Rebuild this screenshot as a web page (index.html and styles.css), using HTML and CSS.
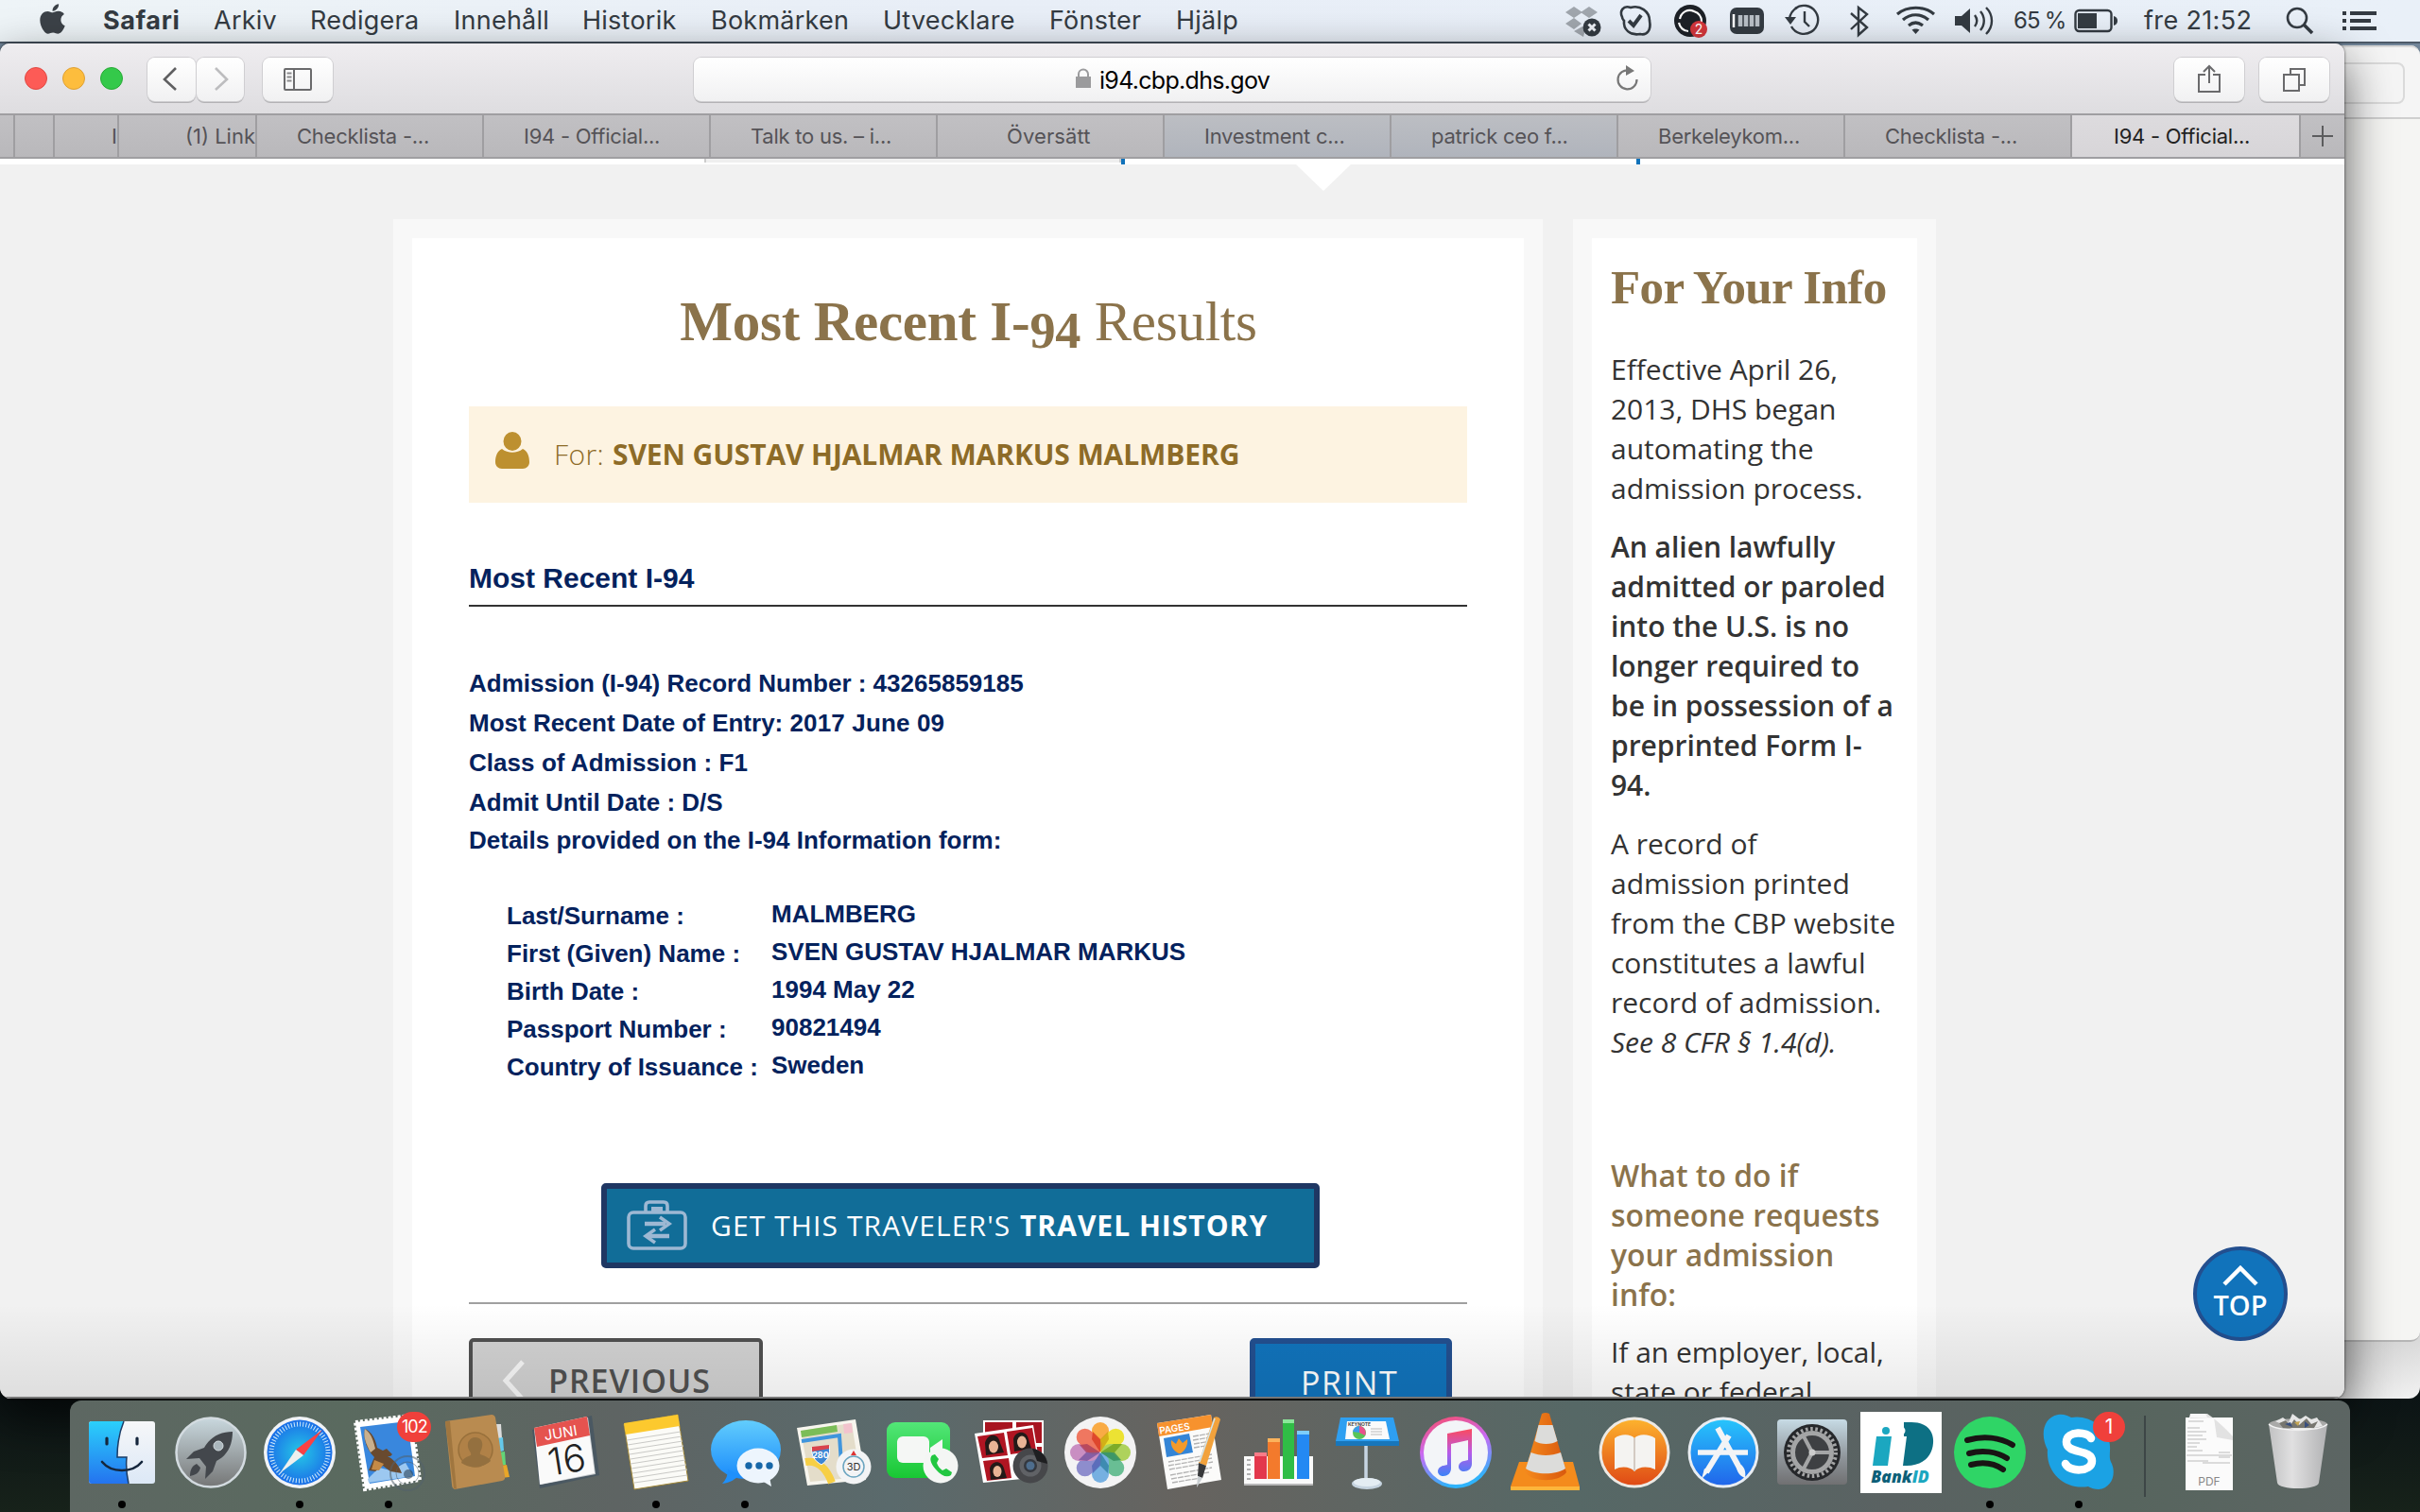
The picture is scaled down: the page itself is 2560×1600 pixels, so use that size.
FILE: index.html
```html
<!DOCTYPE html>
<html lang="sv">
<head>
<meta charset="utf-8">
<title>I94 - Official Website</title>
<link rel="stylesheet" href="styles.css">
</head>
<body>
<div class="desktop">

<header class="menubar">
  <nav class="menus">
    <svg class="apple" viewBox="0 28 384 456"><path d="M318.7 268.7c-.2-36.7 16.4-64.4 50-84.8-18.8-26.9-47.2-41.7-84.7-44.6-35.5-2.8-74.3 20.7-88.5 20.7-15 0-49.4-19.7-76.4-19.7C63.3 141.2 4 184.8 4 273.5q0 39.3 14.4 81.2c12.8 36.7 59 126.7 107.2 125.2 25.2-.6 43-17.9 75.8-17.9 31.8 0 48.3 17.9 76.4 17.9 48.6-.7 90.4-82.5 102.6-119.3-65.2-30.7-61.7-90-61.7-91.9zm-56.6-164.2c27.3-32.4 24.8-61.9 24-72.5-24.1 1.4-52 16.4-67.9 34.9-17.5 19.8-27.8 44.3-25.6 71.9 26.1 2 49.9-11.4 69.5-34.3z"/></svg>
    <b>Safari</b><span>Arkiv</span><span>Redigera</span><span>Innehåll</span><span>Historik</span><span>Bokmärken</span><span>Utvecklare</span><span>Fönster</span><span>Hjälp</span>
  </nav>
  <div class="status">
    <svg width="44" height="44" viewBox="0 0 44 44"><g fill="#a0a6ad"><path d="M11 7l9 6-9 6-9-6zM27 7l9 6-9 6-9-6zM11 19l8 6-8 6-9-6zM11 33l10 6 2-8-3-3z"/></g><circle cx="30" cy="29" r="9.500" fill="#343b42"/><path d="M26.500 25.500l7 7m0-7l-7 7" stroke="#eef2f7" stroke-width="3"/></svg>
    <svg width="40" height="44" viewBox="0 0 40 44"><path d="M6 18C3 12 7 5 15 8c10-3 20 4 20 14 2 10-3 16-10 14-11 2-18-5-17-14-1-1-2-3-2-4z" fill="none" stroke="#343b42" stroke-width="2.600"/><path d="M13 22l5 5 8-11" fill="none" stroke="#343b42" stroke-width="4"/></svg>
    <svg width="42" height="44" viewBox="0 0 42 44"><circle cx="20" cy="22" r="17" fill="#1d2127"/><path d="M9 20c2-8 9-11 15-8 6 2 8 6 8 11M8 24c1 5 5 9 10 9" fill="none" stroke="#fff" stroke-width="2.200"/><circle cx="29" cy="31" r="9" fill="#d3363c"/><text x="29" y="36" class="tiny" font-size="14">2</text></svg>
    <svg width="40" height="44" viewBox="0 0 40 44"><rect x="2" y="8" width="36" height="28" rx="7" fill="#343b42"/><path d="M6 15v14" stroke="#fff" stroke-width="2.500"/><path d="M13 16v12M19 16v12M25 16v12M31 16v12" stroke="#b9c0c7" stroke-width="4.500"/></svg>
    <svg width="40" height="44" viewBox="0 0 40 44"><path d="M8 28A15 15 0 1 0 12 9" fill="none" stroke="#343b42" stroke-width="2.400"/><path d="M6 20A16 16 0 0 1 14 8" fill="none" stroke="#343b42" stroke-width="2.400"/><path d="M1 18h12l-6 8z" fill="#343b42"/><path d="M22 12v11l5 5" fill="none" stroke="#343b42" stroke-width="2.400"/></svg>
    <svg width="34" height="44" viewBox="0 0 34 44"><path d="M8 14l17 15-9 8V8l9 7L8 31" fill="none" stroke="#343b42" stroke-width="2.400"/></svg>
    <svg width="46" height="44" viewBox="0 0 46 44"><path d="M3 15c11-9 28-9 39 0M9 21c8-7 19-7 27 0M15 27c5-4 10-4 15 0" fill="none" stroke="#343b42" stroke-width="3.200"/><path d="M18.500 31.500c2-1.500 6-1.500 8 0L22.500 36z" fill="#343b42"/></svg>
    <svg width="46" height="44" viewBox="0 0 46 44"><path d="M2 17h7l9-8v26l-9-8H2z" fill="#343b42"/><path d="M23 16c3 4 3 8 0 12M29 12c5 6 5 14 0 20M35 8c8 8 8 20 0 28" fill="none" stroke="#343b42" stroke-width="2.400"/></svg>
    <span class="pct">65 %</span>
    <svg width="48" height="44" viewBox="0 0 48 44"><rect x="1.500" y="11" width="38" height="22" rx="4" fill="none" stroke="#343b42" stroke-width="2.400"/><rect x="4" y="14" width="20" height="16" fill="#343b42"/><path d="M42 17q4 1 4 5t-4 5z" fill="#343b42"/></svg>
    <span class="clock">fre 21:52</span>
    <svg width="32" height="44" viewBox="0 0 32 44"><circle cx="12" cy="19" r="10" fill="none" stroke="#343b42" stroke-width="2.600"/><path d="M19 26l9 9" stroke="#343b42" stroke-width="3.600"/></svg>
    <svg width="38" height="44" viewBox="0 0 38 44"><path d="M0 14h4M8 14h28M0 22h4M8 22h22M0 30h4M8 30h28" stroke="#343b42" stroke-width="4"/></svg>
  </div>
</header>

<div class="back back-lower"></div>
<div class="back back-upper"><div class="back-bar"><div class="back-field"></div></div></div>

<section class="window">
  <div class="toolbar">
    <div class="lights"><span class="red"></span><span class="yellow"></span><span class="green"></span></div>
    <div class="btn back-btn"><svg width="50" height="46" viewBox="0 0 50 46"><path d="M30 11L18 23l12 11" fill="none" stroke="#5f5f61" stroke-width="2.600"/></svg></div>
    <div class="btn fwd-btn"><svg width="50" height="46" viewBox="0 0 50 46"><path d="M20 11l12 12-12 11" fill="none" stroke="#bdbdbf" stroke-width="2.600"/></svg></div>
    <div class="btn side-btn"><svg width="74" height="46" viewBox="0 0 74 46"><rect x="23" y="12" width="28" height="22" rx="1" fill="none" stroke="#6a6a6c" stroke-width="2"/><path d="M33 12v22" stroke="#6a6a6c" stroke-width="2"/><path d="M25.500 16.500h5m-5 4h5m-5 4h5" stroke="#8a8a8c" stroke-width="2"/></svg></div>
    <div class="url">
      <svg class="lock" width="16" height="22" viewBox="0 0 16 22"><rect y="9" width="16" height="12" fill="#9b9b9d"/><path d="M3 10V6.500a5 5 0 0 1 10 0V10" fill="none" stroke="#9b9b9d" stroke-width="2"/></svg>
      <span class="host">i94.cbp.dhs.gov</span>
      <svg class="reload" width="26" height="30" viewBox="0 0 26 30"><path d="M22.500 16a10 10 0 1 1-8-9.500" fill="none" stroke="#777" stroke-width="2.200"/><path d="M11 1l9 6-9 5z" fill="#777"/></svg>
    </div>
    <div class="btn share-btn"><svg width="74" height="46" viewBox="0 0 74 46"><path d="M33 18h-7v18h22V18h-7M37 27V9m-6 6l6-6 6 6" fill="none" stroke="#6a6a6c" stroke-width="2"/></svg></div>
    <div class="btn tabs-btn"><svg width="74" height="46" viewBox="0 0 74 46"><path d="M33 17v-5h15v17h-5M26 18h16v17H26z" fill="none" stroke="#6a6a6c" stroke-width="2"/></svg></div>
  </div>
  <div class="tabs">
    <div></div><div></div><div class="cut cut-i">I</div><div class="cut">(1) Link</div>
    <div class="tab">Checklista -...</div>
    <div class="tab">I94 - Official...</div>
    <div class="tab">Talk to us. – i...</div>
    <div class="tab mid">Översätt</div>
    <div class="tab cool">Investment c...</div>
    <div class="tab cool">patrick ceo f...</div>
    <div class="tab">Berkeleykom...</div>
    <div class="tab">Checklista -...</div>
    <div class="tab active">I94 - Official...</div>
    <div class="plus"><svg width="22" height="22" viewBox="0 0 22 22"><path d="M11 0v22M0 11h22" stroke="#5c5c5e" stroke-width="2"/></svg></div>
  </div>

  <main class="page">
    <div class="strip"><span class="strip-gray"></span><span class="tick"></span><span class="strip-gap"></span><span class="tick"></span></div>
    <svg class="pointer" width="58" height="28" viewBox="0 0 58 28"><path d="M0 0h58L29 28z" fill="#fff"/></svg>
    <div class="columns">
      <article class="card main-card"><div class="inner">
        <h1><b>Most Recent I-<span class="old">94</span></b> Results</h1>
        <div class="banner">
          <svg width="36" height="40" viewBox="0 0 36 40"><g fill="#bd9030"><ellipse cx="18" cy="10" rx="9.500" ry="10"/><path d="M7 18c-5 2-7 8-7 14 0 4 3 7 7 7h22c4 0 7-3 7-7 0-6-2-12-7-14-6 5-16 5-22 0z"/></g></svg>
          <p><span class="for">For:</span><b>SVEN GUSTAV HJALMAR MARKUS MALMBERG</b></p>
        </div>
        <h2>Most Recent I-94</h2>
        <ul class="facts">
          <li>Admission (I-94) Record Number : 43265859185</li>
          <li>Most Recent Date of Entry: <span class="entry">2017 June 09</span></li>
          <li class="class">Class of Admission : F1</li>
          <li>Admit Until Date : D/S</li>
          <li class="last">Details provided on the I-94 Information form:</li>
        </ul>
        <div class="details">
          <ul class="labels"><li>Last/Surname :</li><li>First (Given) Name :</li><li>Birth Date :</li><li>Passport Number :</li><li>Country of Issuance :</li></ul>
          <ul class="values"><li>MALMBERG</li><li>SVEN GUSTAV HJALMAR MARKUS</li><li>1994 May 22</li><li>90821494</li><li>Sweden</li></ul>
        </div>
        <div class="history">
          <svg width="66" height="56" viewBox="0 0 66 56"><g fill="none" stroke="#9db8d3" stroke-width="3.600"><rect x="3" y="14" width="60" height="38" rx="5"/><path d="M21 14V7q0-4 4-4h15q4 0 4 4v7"/></g><rect x="27" y="8" width="12" height="6" fill="#9db8d3"/><path d="M20 26h22M46 39H24" stroke="#9db8d3" stroke-width="4.500"/><path d="M36 19l10 7-10 7M31 32l-10 7 10 7" fill="none" stroke="#9db8d3" stroke-width="3.500"/></svg>
          <span class="hist-a">GET THIS TRAVELER'S</span><b>TRAVEL HISTORY</b>
        </div>
        <hr>
        <div class="actions">
          <div class="prev"><svg width="26" height="46" viewBox="0 0 26 46"><path d="M23 3L5 23l18 20" fill="none" stroke="#f6f6f6" stroke-width="5"/></svg><span>PREVIOUS</span></div>
          <div class="print"><span>PRINT</span></div>
        </div>
      </div></article>
      <aside class="card side-card"><div class="inner">
        <h3>For Your Info</h3>
        <p>Effective April 26,<br>2013, DHS began<br>automating the<br>admission process.</p>
        <p class="strong">An alien lawfully<br>admitted or paroled<br>into the U.S. is no<br>longer required to<br>be in possession of a<br>preprinted Form I-<br>94.</p>
        <p>A record of<br>admission printed<br>from the CBP website<br>constitutes a lawful<br>record of admission.<br><em>See 8 CFR § 1.4(d).</em></p>
        <h4>What to do if<br>someone requests<br>your admission<br>info:</h4>
        <p>If an employer, local,<br>state or federal</p>
      </div></aside>
    </div>
    <div class="top"><svg width="40" height="26" viewBox="0 0 40 26"><path d="M3 22L20 5l17 17" fill="none" stroke="#fff" stroke-width="4.500"/></svg><span>TOP</span></div>
    <div class="fade"></div>
  </main>
</section>

<footer class="dock">
<div class="app run"><svg viewBox="0 0 84 84"><defs><linearGradient id="fa" x2="0" y2="1"><stop stop-color="#2bd0fb"/><stop offset="1" stop-color="#2473ef"/></linearGradient><linearGradient id="fb" x2="0" y2="1"><stop stop-color="#f6f7f9"/><stop offset="1" stop-color="#dce8f6"/></linearGradient></defs><rect x="7" y="9" width="70" height="66" rx="3" fill="url(#fb)"/><path d="M10 9h34c-5 12-7 24-7 38h10c-1 10 0 19 2 28H10q-3 0-3-3V12q0-3 3-3z" fill="url(#fa)"/><path d="M44 9c-5 12-7 24-7 38h10c-1 10 0 19 2 28" fill="none" stroke="#1b3c66" stroke-width="1.500"/><path d="M26 27v6M58 27v6" stroke="#15263c" stroke-width="3.200" stroke-linecap="round"/><path d="M21 52c10 12 32 12 42 0" fill="none" stroke="#15263c" stroke-width="2.600" stroke-linecap="round"/></svg></div>
<div class="app"><svg viewBox="0 0 84 84"><defs><linearGradient id="la" x2="0" y2="1"><stop stop-color="#c9d8de"/><stop offset="1" stop-color="#757676"/></linearGradient></defs><circle cx="42" cy="42" r="36.500" fill="url(#la)" stroke="#d3dbe0" stroke-width="2.500"/><path d="M65 20c-13 0-24 6-30 17l-11 4-8 8 14-1 7 9-1 13 8-8 4-11c10-5 17-15 17-31z" fill="#43474c"/><circle cx="50" cy="35" r="5" fill="#aab6bc" stroke="#d5dde1"/><path d="M27 54c-6 3-7 8-7 13 5-1 10-3 11-9z" fill="#43474c"/></svg></div>
<div class="app run"><svg viewBox="0 0 84 84"><defs><radialGradient id="sa"><stop stop-color="#25c8e6"/><stop offset="1" stop-color="#1b6fe8"/></radialGradient></defs><circle cx="42" cy="42" r="38" fill="#f1f3f6"/><circle cx="42" cy="42" r="34.500" fill="url(#sa)"/><circle cx="42" cy="42" r="30" fill="none" stroke="#d4ecfb" stroke-width="5" stroke-dasharray="1 2.140"/><path d="M66 18L46 45l-8-6z" fill="#fb4144"/><path d="M21 64l17-25 8 6z" fill="#eef0ee"/></svg></div>
<div class="app run"><svg viewBox="0 0 84 84"><path d="M7 10l59-7 9 68-58 10z" fill="#fff" stroke="#fff" stroke-width="4" stroke-dasharray="3 2"/><path d="M12 15l50-6 8 58-48 8z" fill="#3987dd"/><path d="M20 70l12-12 12 3 16-8 8 14-47 7z" fill="#9cc8f0"/><path d="M17 17c7 3 11 10 13 20l6 3 4-2 6 6-2 2-3 0c6 3 12 9 15 18l-12-2-8-6-8 6-7-1 6-14c-8-8-12-18-10-30z" fill="#694a2f"/><path d="M17 17c7 5 9 13 11 21l-5 4c-5-9-8-17-6-25z" fill="#c9b08d"/><path d="M27 50l-3 10 8 1 5-7z" fill="#c58a46"/><circle cx="62" cy="64" r="18" fill="none" stroke="#52606b" stroke-width="2" opacity=".55"/><circle cx="62" cy="64" r="12" fill="none" stroke="#52606b" opacity=".55"/><circle cx="63" cy="65" r="5" fill="#2d4256" opacity=".6"/></svg><span class="badge wide">102</span></div>
<div class="app"><svg viewBox="0 0 84 84"><path d="M60 12l7 0 1 15-6 2z" fill="#dcdcdc"/><path d="M63 27l6-1 1 14-6 2z" fill="#64c8ea"/><path d="M64 42l7-1 1 14-6 1z" fill="#63d578"/><path d="M66 56l7-1 3 13-9 1z" fill="#e9a628"/><path d="M8 9l49-7q3 0 4 3l10 62q1 4-3 5l-50 9q-3-1-3-5z" fill="#b98b50"/><path d="M8 9l5 0 7 72-3-1z" fill="#a0763f"/><ellipse cx="40" cy="39" rx="18" ry="18" fill="#b08147" stroke="#98703b" stroke-width="1.500"/><path d="M40 26c6 0 8 5 7 10-1 5-3 6-2 8 6 2 10 4 11 7-8 8-23 8-31 2 1-4 5-6 10-8 1-3-2-4-3-9-1-6 3-10 8-10z" fill="#94703f"/></svg></div>
<div class="app"><svg viewBox="0 0 84 84"><path d="M5 18l63-15 8 63-63 14z" fill="#4a5862"/><path d="M9 16l55-11 8 60-58 11z" fill="#c6cace"/><path d="M7 16l56-12 8 60-58 12z" fill="#fafafa"/><path d="M7 16l56-12 3 20-56 12z" fill="#e5534f"/><g transform="rotate(-9 40 40)"><text x="38" y="26" class="ic" font-size="15" fill="#fff">JUNI</text><text x="40" y="64" class="ic" font-size="40" font-weight="300" fill="#222">16</text></g></svg></div>
<div class="app run"><svg viewBox="0 0 84 84"><path d="M8 12l57-10 11 70-57 9z" fill="#fbfbf7" stroke="#a58a37"/><path d="M8 11l57-9 2 12-57 9z" fill="#fcc92e"/><path d="M11 29l57-9M12 34l57-9M13 39l57-9M14 44l57-9M15 49l56-9M15 54l57-9M16 59l57-9M17 64l57-9M18 69l57-9M19 74l56-8" stroke="#c9c9c6" stroke-width="1"/></svg></div>
<div class="app run"><svg viewBox="0 0 84 84"><defs><linearGradient id="ma" x2="0" y2="1"><stop stop-color="#62cdfd"/><stop offset="1" stop-color="#1a8bfb"/></linearGradient></defs><ellipse cx="43" cy="39" rx="37" ry="31" fill="url(#ma)"/><path d="M24 60c0 6-2 11-6 15 9-1 14-5 18-9z" fill="#1f90fb"/><ellipse cx="56" cy="56" rx="22.500" ry="18.500" fill="#edf5fd"/><path d="M60 72l10 6-2-10z" fill="#edf5fd"/><circle cx="46" cy="56" r="3.700" fill="#1767a8"/><circle cx="57" cy="56" r="3.700" fill="#1767a8"/><circle cx="68" cy="56" r="3.700" fill="#1767a8"/></svg></div>
<div class="app"><svg viewBox="0 0 84 84"><path d="M3 16l62-9 11 64-62 6z" fill="#f7f5ee"/><path d="M7 19l54-8 9 57-53 5z" fill="#e4ddca"/><path d="M7 19l38-6 1 7-38 6z" fill="#7bbd58"/><path d="M52 12l9-1 1 10-9 1z" fill="#f2c3cd"/><path d="M8 30l40-6 3 45" fill="none" stroke="#3f95dd" stroke-width="4"/><path d="M12 52c12-2 22 6 28 22" fill="none" stroke="#f7cf45" stroke-width="8"/><path d="M19 37l18-2c2 9-1 15-8 20-7-4-11-9-10-18z" fill="#3d86d4" stroke="#fff"/><path d="M19 36l18-2v4l-18 3z" fill="#d8434d"/><text x="28" y="48" class="ic" font-size="9" font-weight="700" fill="#fff">280</text><circle cx="63" cy="57" r="18.500" fill="#f3f4f5"/><circle cx="63" cy="57" r="11" fill="none" stroke="#6ba5c0" stroke-width="1.500"/><text x="63" y="61" class="ic" font-size="11" fill="#333">3D</text><path d="M63 40l3 5h-6z" fill="#d33"/></svg></div>
<div class="app"><svg viewBox="0 0 84 84"><defs><linearGradient id="ga" x2="0" y2="1"><stop stop-color="#53e678"/><stop offset="1" stop-color="#18c733"/></linearGradient></defs><rect x="4" y="10" width="67" height="59" rx="9" fill="url(#ga)"/><rect x="15" y="25" width="34" height="28" rx="6" fill="#f5f7f5"/><path d="M50 37l13-9v26l-13-9z" fill="#f5f7f5"/><circle cx="61" cy="56" r="18.500" fill="#f4f6f4"/><path d="M52 45c-3 3-2 8 4 15s12 9 16 6l1-3-6-4-4 2c-3-2-5-5-6-8l2-4-4-5z" fill="#22c741"/></svg></div>
<div class="app"><svg viewBox="0 0 84 84"><path d="M12 8h64v54H12z" fill="#fff"/><path d="M14 10h29v22H14zM47 10h27v22H47zM47 36h27v22H47z" fill="#a81420"/><path d="M3 22l62-9 9 55-62 6z" fill="#fff"/><path d="M6 25l28-4 4 24-27 3zM37 20l27-4 4 24-27 4zM12 51l27-3 3 21-26 3z" fill="#b01522"/><g fill="#231a18"><path d="M15 45l-1-13c2-10 14-12 16 0l4 10zM45 41l-1-13c2-9 14-10 16 0l3 10zM20 71l-1-12c2-9 13-9 15 0l3 10z"/></g><g fill="#e9b495"><ellipse cx="23" cy="36" rx="5" ry="6.500"/><ellipse cx="53" cy="31" rx="5" ry="6.500"/><ellipse cx="27" cy="62" rx="4.500" ry="6"/></g><circle cx="62" cy="56" r="18.500" fill="#46474a"/><circle cx="62" cy="56" r="11.500" fill="#606266"/><circle cx="62" cy="56" r="7" fill="#34383f"/><circle cx="62" cy="56" r="4.500" fill="#4e6d8d"/><path d="M64 38a18 18 0 0 1 16 16l-11-3z" fill="#1e1f21"/></svg></div>
<div class="app"><svg viewBox="0 0 84 84"><circle cx="42" cy="42" r="38" fill="#f3f3f4"/><g opacity=".9"><rect x="33" y="10" width="18" height="31" rx="9" fill="#faa433"/><rect x="33" y="10" width="18" height="31" rx="9" fill="#ece11f" transform="rotate(45 42 42)"/><rect x="33" y="10" width="18" height="31" rx="9" fill="#a7cf4c" transform="rotate(90 42 42)"/><rect x="33" y="10" width="18" height="31" rx="9" fill="#5bb98a" transform="rotate(135 42 42)"/><rect x="33" y="10" width="18" height="31" rx="9" fill="#69a9e0" transform="rotate(180 42 42)"/><rect x="33" y="10" width="18" height="31" rx="9" fill="#8483c9" transform="rotate(225 42 42)"/><rect x="33" y="10" width="18" height="31" rx="9" fill="#c584bd" transform="rotate(270 42 42)"/><rect x="33" y="10" width="18" height="31" rx="9" fill="#ef6a51" transform="rotate(315 42 42)"/></g><g fill-opacity=".75"><path d="M42 42l-9-14 1-8 8 8z" fill="#d8371c"/><path d="M42 42l0-14 8-8 1 8z" fill="#c9a00f"/><path d="M42 42l14-9 9 0-8 9z" fill="#6d9e18"/><path d="M42 42l15 0 7 8-8 1z" fill="#2f8a58"/><path d="M42 42l9 14-1 8-8-8z" fill="#2c7fa0"/><path d="M42 42l0 14-8 8-1-8z" fill="#4a63b4"/><path d="M42 42l-14 9-9-1 8-8z" fill="#6d4f9c"/><path d="M42 42l-15 0-7-8 8-1z" fill="#a53a5c"/></g></svg></div>
<div class="app"><svg viewBox="0 0 84 84"><path d="M8 11l57-9 11 69-57 10z" fill="#fbfbfa"/><path d="M8 11l57-9 2 13-57 10z" fill="#f7922e"/><text x="27" y="20" class="ic" font-size="10" font-weight="600" fill="#fff" transform="rotate(-9 27 20)">PAGES</text><path d="M15 27l27-5 4 20-28 5z" fill="#3485d6"/><path d="M31 43c-6-3-9-8-8-14l5 4 3-6 4 5 5-4c1 7-3 12-7 15z" fill="#f39a2b"/><path d="M46 25l18-3M46 29l18-3M47 33l18-3M47 37l18-3M20 52l46-8M20 56l46-8M21 60l46-8M22 66l44-8M23 70l40-7M24 74l30-5" stroke="#b3b3b3" stroke-width="1.300" stroke-dasharray="6 1"/><path d="M68 5q5-2 7 2L60 56l-8-3z" fill="#f2a23c"/><path d="M69 6L53 52" stroke="#cfe4ee" stroke-width="1.500"/><path d="M52 53l8 3-4 13-5-2z" fill="#38393b"/><path d="M51 67l5 2-6 10z" fill="#c9ced1"/></svg></div>
<div class="app"><svg viewBox="0 0 84 84"><path d="M6 46h73v29H6z" fill="#fafafa"/><path d="M6 75h73v2H6z" fill="#b9b9b9"/><path d="M9 50h4M9 55h4M9 60h4M9 65h4M9 70h4" stroke="#999" stroke-width="1.500"/><rect x="17" y="42" width="13" height="28" fill="#e3374c"/><rect x="31" y="27" width="13" height="43" fill="#f37a2c"/><rect x="47" y="7" width="12" height="63" fill="#30bd46"/><rect x="62" y="19" width="13" height="51" fill="#2489f3"/><path d="M17 42h13v4H17z" fill="#f97c88"/><path d="M31 27h13v4H31z" fill="#fbb25c"/><path d="M47 7h12v4H47z" fill="#8be79a"/><path d="M62 19h13v4H62z" fill="#7dcdfb"/></svg></div>
<div class="app"><svg viewBox="0 0 84 84"><path d="M14 5h56l6 25v4H9v-4z" fill="#2e9ff1"/><path d="M9 30h67v5H9z" fill="#1876bb"/><path d="M21 9h41l4 19H19z" fill="#fbfbfb"/><text x="34" y="14" class="ic" font-size="5" font-weight="700" fill="#444">KEYNOTE</text><circle cx="34" cy="21" r="7" fill="#58c458"/><path d="M34 21v-7a7 7 0 0 1 6 10z" fill="#e8518d"/><path d="M34 21l-7-1a7 7 0 0 1 7-6z" fill="#3a9bea"/><path d="M46 17h12M46 20h12M46 23h12" stroke="#bbb"/><path d="M41 35v38" stroke="#c7d5e2" stroke-width="3.500"/><ellipse cx="42" cy="75" rx="16" ry="6" fill="#c5d3df"/><ellipse cx="42" cy="73.500" rx="14" ry="4.500" fill="#e4edf3"/></svg></div>
<div class="app"><svg viewBox="0 0 84 84"><defs><linearGradient id="ia" x2=".3" y2="1"><stop stop-color="#fb4b62"/><stop offset=".5" stop-color="#c86af5"/><stop offset="1" stop-color="#2fb3fb"/></linearGradient><linearGradient id="ib" x2="0" y2="1"><stop stop-color="#fb4a5d"/><stop offset=".5" stop-color="#b85ae8"/><stop offset="1" stop-color="#3d83f7"/></linearGradient></defs><circle cx="42" cy="42" r="38" fill="url(#ia)"/><circle cx="42" cy="42" r="34" fill="#f3f5f8"/><path d="M33 22l26-5v37c0 5-4 8-8 8-8 0-8-10 0-11l4-1V29l-18 4v26c0 5-4 8-8 8-8 0-8-10 0-11l4-1z" fill="url(#ib)"/></svg></div>
<div class="app"><svg viewBox="0 0 84 84"><defs><linearGradient id="va"><stop stop-color="#f58a1d"/><stop offset="1" stop-color="#d9590e"/></linearGradient></defs><path d="M14 52h57l7 26v4H5v-4z" fill="#f48b1c"/><path d="M5 78h73v4H5z" fill="#fdb53b"/><path d="M38 1q4-2 8 0l18 62c-8 11-36 11-44 0z" fill="url(#va)"/><path d="M34.500 13h15l5 17c-6 4-18 4-24 0zM26.500 42c10 4 21 4 31.500 0l5 17c-10 7-32 7-42 0z" fill="#dcdcda"/></svg></div>
<div class="app"><svg viewBox="0 0 84 84"><defs><linearGradient id="ba" x2="0" y2="1"><stop stop-color="#fdb42e"/><stop offset="1" stop-color="#df4815"/></linearGradient></defs><circle cx="42" cy="42" r="36" fill="url(#ba)" stroke="#ece9e4" stroke-width="3"/><path d="M42 27c-4-5-15-5-21 0v33c7-4 17-3 21 2 4-5 14-6 22-2V27c-7-5-18-5-22 0z" fill="#f4f3f1"/><path d="M42 27v35" stroke="#c9bdb3" stroke-width="1.500"/></svg></div>
<div class="app"><svg viewBox="0 0 84 84"><defs><linearGradient id="aa" x2="0" y2="1"><stop stop-color="#27c6fc"/><stop offset="1" stop-color="#2164ea"/></linearGradient></defs><circle cx="42" cy="42" r="36" fill="url(#aa)" stroke="#e9edf2" stroke-width="3"/><path d="M15 42h53" stroke="#f2f4f6" stroke-width="5.500"/><path d="M48 24L24 63M36 16l24 44" stroke="#f2f4f6" stroke-width="6"/><path d="M56 58l5-3c4 4 5 8 4 14-5-2-8-5-9-11zM22 59l5 3-8 8z" fill="#f2f4f6"/></svg></div>
<div class="app"><svg viewBox="0 0 84 84"><defs><linearGradient id="pa" x2="0" y2="1"><stop stop-color="#c7dbe5"/><stop offset=".6" stop-color="#8d9398"/><stop offset="1" stop-color="#707072"/></linearGradient></defs><rect x="5" y="7" width="74" height="69" rx="4" fill="url(#pa)"/><circle cx="42" cy="42" r="30" fill="#26282b"/><circle cx="42" cy="42" r="25" fill="none" stroke="#a4a5a6" stroke-width="4" stroke-dasharray="2.600 2.636"/><circle cx="42" cy="42" r="20.500" fill="#3e4043" stroke="#a4a5a6" stroke-width="5"/><path d="M42 42h21M42 42L32 23M42 42L32 61" stroke="#a4a5a6" stroke-width="4"/><circle cx="42" cy="42" r="3.500" fill="#ccc"/></svg></div>
<div class="app"><svg class="full" viewBox="0 0 86 86"><path fill="#fff" d="M0 0h86v86H0z"/><path d="M17 26h16l-4 31H13z" fill="#1ba7c0"/><circle cx="27" cy="20" r="4" fill="#1ba7c0"/><path d="M46 11h8c16 0 24 9 23 22-1 15-12 24-28 24h-4l4-31h-3z" fill="#0d7084"/><circle cx="43" cy="20" r="4.500" fill="#fff"/><path d="M38 26h10l-4 31h-9z" fill="#fff"/><text x="42" y="75" class="ic bank" font-size="17.500" fill="#0d5f78">Bank<tspan fill="#1ba7c0">ID</tspan></text></svg></div>
<div class="app run"><svg viewBox="0 0 84 84"><circle cx="42" cy="42" r="38" fill="#2fd566"/><path d="M18 29c17-5 35-3 48 5M20 43c14-4 29-2 40 5M22 55c12-3 24-2 34 5" fill="none" stroke="#191414" stroke-width="6" stroke-linecap="round"/></svg></div>
<div class="app run"><svg viewBox="0 0 84 84"><path d="M9 39C1 24 4 5 20 2c6-1 10 1 14 3 21-4 43 14 41 35 0 6-1 9 2 14 5 12-1 26-14 27-4 0-8-1-11-3C30 82 7 66 9 39z" fill="#1ba2e4"/><path d="M55 27C52 20 29 18 29 31c0 13 27 7 27 20 0 12-24 12-28 3" fill="none" stroke="#fff" stroke-width="8.500" stroke-linecap="round"/></svg><span class="badge one">1</span></div>
<div class="sep"></div>
<div class="app"><svg viewBox="0 0 84 84"><path d="M17 5h50v77H17z" fill="#fbfbfb"/><path d="M22 1h18c6 4 16 12 27 24v4L50 26 47 5l-25 1z" fill="#e2e2e2"/><path d="M22 1h16l2 4H21z" fill="#f7f7f7"/><path d="M20 9h16M19 16h13M19 20h20M19 24h16M19 28h20M19 32h13M19 36h10M19 40h16M52 42h12M18 45h48M52 47h12M19 51h22M35 53h29" stroke="#bbb" stroke-width="1.200"/><text x="42" y="77" class="ic" font-size="12" fill="#888">PDF</text></svg></div>
<div class="app"><svg viewBox="0 0 84 84"><defs><linearGradient id="ta"><stop stop-color="#c5c5c6"/><stop offset=".4" stop-color="#e6e5e6"/><stop offset="1" stop-color="#b5b5b7"/></linearGradient></defs><ellipse cx="42" cy="12" rx="31" ry="6" fill="#a9a9a8"/><path d="M18 9l8-4 6 5 4-9 8 6 6-4 6 4 6-2 6 9-26 6z" fill="#e6e6e6"/><path d="M22 11l7-3 5 5 4-6 5 6 8-7 5 6 7-3-4 7H26z" fill="#77766f"/><path d="M28 12l6-2 2 5zM49 9l5 4-5 3z" fill="#384e7e"/><path d="M38 10l6-1-2 5z" fill="#c3a451"/><path d="M11 12c8 8 54 8 62 0l-9 62c-1 8-43 8-44 0z" fill="url(#ta)" opacity=".96"/><path d="M11 12c8 8 54 8 62 0" fill="none" stroke="#f3f3f3" stroke-width="1.500"/></svg></div>
</footer>
</div>
</body>
</html>
```
FILE: styles.css
```css
* { box-sizing: border-box; }
body { margin: 0; }
ul { list-style: none; margin: 0; padding: 0; }
h1, h2, h3, h4, p { margin: 0; }
svg { display: block; flex: none; }

.desktop {
  position: relative;
  width: 2560px;
  height: 1600px;
  overflow: hidden;
  font-family: Inter, "Liberation Sans", sans-serif;
  background: linear-gradient(#4d5a68 46px, #72869a 46px, #5f7386 80px, #0a1012 1300px, #0c1415 1480px, #17221a 1600px);
}

.menubar {
  display: flex;
  height: 44px;
  padding-left: 42px;
  background: linear-gradient(90deg, #eef4f7, #e8eef7 40%, #e9f0f8);
  color: #343b42;
  font-size: 27px;
  line-height: 44px;
  letter-spacing: .25px;
  white-space: nowrap;
}
.menus {
  display: grid;
  grid-template-columns: 67px 117px 102px 152px 136px 136px 182px 176px 134px 410px;
}
.menus b { letter-spacing: .6px; }
.apple { width: 27px; height: 32px; margin-top: 4px; fill: #3c4248; }
.status {
  display: grid;
  grid-template-columns: 56px 58px 60px 59px 63px 54px 62px 64px 64px 74px 150px 60px 40px;
}
.tiny { fill: #fff; text-anchor: middle; font-family: Inter, sans-serif; letter-spacing: 0; }
.pct { font-size: 24px; letter-spacing: -.8px; word-spacing: -1px; }
.clock { letter-spacing: .35px; }

.back { position: absolute; right: 0; width: 300px; }
.back-upper {
  top: 48px;
  height: 1372px;
  border-radius: 0 10px 10px 0;
  background: #f5f5f3;
  border-bottom: 2px solid #b5b5b5;
}
.back-lower { top: 1000px; height: 480px; border-radius: 0 0 12px 0; background: linear-gradient(160deg, #c4c4c4 80%, #f2f2f2); }
.back-bar {
  height: 78px;
  padding: 16px 16px 0 0;
  border-radius: 0 10px 0 0;
  border-top: 2px solid #d8d8d8;
  border-bottom: 2px solid #cfcfcf;
  background: #f5f5f5;
}
.back-field { height: 44px; border: 2px solid #dadada; border-radius: 8px; }

.window {
  position: absolute;
  left: 0;
  top: 46px;
  width: 2480px;
  height: 1434px;
  overflow: hidden;
  border-radius: 10px 10px 12px 12px;
  background: #f1f1f1;
  box-shadow: 0 0 3px rgba(0,0,0,.7), 0 20px 50px rgba(0,0,0,.65);
}
.toolbar {
  display: flex;
  height: 74px;
  padding: 15px 16px 0 26px;
  background: linear-gradient(#efedf0, #dedde0);
}
.lights { display: flex; gap: 16px; width: 130px; padding-top: 10px; }
.lights span { width: 24px; height: 24px; border-radius: 50%; }
.red { background: #fd5b56; border: 1px solid #e04842; }
.yellow { background: #fdbd3d; border: 1px solid #dfa033; }
.green { background: #34c94a; border: 1px solid #27aa35; }
.btn, .url {
  height: 46px;
  border-radius: 8px;
  background: linear-gradient(#fff, #f1f1f2);
  box-shadow: 0 0 0 1px #cfced1, 0 2px 0 #b3b2b5;
}
.btn { display: flex; }
.back-btn { width: 51px; }
.fwd-btn { width: 50px; margin-left: 1px; }
.side-btn { width: 74px; margin-left: 20px; }
.url {
  display: flex;
  width: 1012px;
  margin: 0 554px 0 382px;
  padding-left: 404px;
  align-items: center;
  font-size: 25px;
  letter-spacing: -.7px;
  color: #000;
}
.lock { margin: -2px 9px 0 0; }
.host { width: 546px; padding-top: 1px; }
.reload { margin-top: -2px; }
.share-btn { width: 74px; }
.tabs-btn { width: 74px; margin-left: 16px; }

.tabs {
  display: grid;
  grid-template-columns: 16px 42px 68px 146px repeat(8, 240px) 242px 46px;
  height: 48px;
  border-top: 2px solid #9f9ea1;
  border-bottom: 2px solid #9f9ea1;
  font-size: 22px;
  line-height: 44px;
  letter-spacing: -.25px;
  color: #555357;
  white-space: nowrap;
}
.tabs > div { overflow: hidden; border-right: 2px solid #9f9ea1; background: linear-gradient(#c1c0c3, #b9b8bb); }
.tabs .tab { padding-left: 42px; }
.tabs .mid { padding-left: 73px; letter-spacing: .1px; }
.tabs .cool { background: linear-gradient(#bcbec3, #b0b4bc); }
.tabs .cut { text-align: right; letter-spacing: 0; }
.tabs .cut-i { padding-right: 0; }
.tabs .active { padding-left: 44px; background: linear-gradient(#dddbde, #d7d5d8); color: #222; }
.tabs .plus { border-right: 0; padding: 11px 0 0 12px; }

.page { position: relative; height: 1312px; overflow: hidden; background: #f1f1f1; }
.strip { display: flex; height: 6px; background: #fff; padding-left: 745px; }
.strip-gray { width: 441px; height: 4px; background: #efefef; border-left: 2px solid #ccc; border-right: 2px solid #ccc; }
.tick { width: 4px; background: #0f72ba; }
.strip-gap { width: 541px; }
.pointer { margin-left: 1371px; }
.columns { display: flex; gap: 32px; padding: 30px 0 0 416px; }
.card { height: 1300px; padding: 20px; background: #f8f8f8; }
.main-card { width: 1216px; }
.side-card { width: 384px; }
.inner { height: 1300px; background: #fff; }
.main-card .inner { padding: 48px 60px 0; }
.side-card .inner { padding: 22px 20px 0; }

h1, h3 { font-family: "Liberation Serif", serif; color: #8b734b; white-space: nowrap; }
h1 { height: 80px; padding-left: 1px; font-size: 59px; line-height: 80px; font-weight: 400; letter-spacing: -.25px; text-align: center; }
.old { font-size: .92em; vertical-align: -.14em; line-height: 1; }
.banner {
  display: flex;
  height: 102px;
  margin-top: 50px;
  padding-left: 28px;
  align-items: center;
  background: #fdf3e1;
  color: #8d6b27;
  font: 30px/42px "Open Sans", sans-serif;
  white-space: nowrap;
}
.banner svg { margin: -9px 26px 0 0; }
.banner p { display: flex; letter-spacing: -.1px; }
.for { width: 62px; font-weight: 300; letter-spacing: .4px; }
h2, .facts, .details { font-family: "Liberation Sans", Arial, sans-serif; font-weight: 700; color: #04225d; white-space: nowrap; }
h2 { height: 50px; margin-top: 60px; padding-bottom: 8px; border-bottom: 2px solid #333; font-size: 30px; line-height: 40px; }
.facts { margin-top: 60px; font-size: 26px; line-height: 42px; }
.facts .last { line-height: 38px; }
.entry { letter-spacing: .15px; }
.class { letter-spacing: .05px; }
.details { display: flex; margin-top: 39px; padding-left: 40px; font-size: 26px; line-height: 40px; }
.labels { width: 280px; padding-top: 2px; }
.history {
  display: flex;
  width: 760px;
  height: 90px;
  margin: 103px 0 0 140px;
  padding-left: 20px;
  align-items: center;
  border: 6px solid #1f3763;
  border-radius: 5px;
  background: #116d98;
  color: #fff;
  font: 30px/42px "Open Sans", sans-serif;
  letter-spacing: 1px;
  white-space: nowrap;
}
.hist-a { width: 327px; margin-left: 24px; letter-spacing: 1.100px; }
hr { height: 2px; margin: 36px 0; border: 0; background: #a0a0a0; }
.actions { display: flex; justify-content: space-between; font: 34px/42px "Open Sans", sans-serif; letter-spacing: 1.500px; }
.prev {
  display: flex;
  width: 311px;
  height: 90px;
  padding-left: 30px;
  align-items: center;
  border: 4px solid #505050;
  border-radius: 5px;
  background: #d1d1d1;
  color: #505050;
  font-weight: 600;
  letter-spacing: 1px;
}
.prev svg { margin-right: 24px; }
.print {
  display: flex;
  width: 214px;
  height: 94px;
  margin-right: 16px;
  padding-left: 48px;
  align-items: center;
  border: 6px solid #234f8f;
  border-radius: 5px;
  background: #1173bb;
  color: #fff;
  font-weight: 500;
  letter-spacing: 1.600px;
}

h3 { height: 60px; font-size: 51px; line-height: 60px; letter-spacing: -.6px; margin-bottom: 36px; }
.side-card p { margin-bottom: 20px; font: 30px/42px "Open Sans", sans-serif; letter-spacing: -.03px; color: #333; white-space: nowrap; }
.side-card .strong { font-weight: 600; }
h4 { margin: 99px 0 19px; font: 600 31.900px/42px "Open Sans", sans-serif; color: #8b734b; }

.top {
  position: absolute;
  left: 2320px;
  top: 1151px;
  display: flex;
  flex-direction: column;
  align-items: center;
  width: 100px;
  height: 100px;
  padding-top: 14px;
  border: 4px solid #234f8f;
  border-radius: 50%;
  background: #1173bb;
  color: #fff;
  font: 600 29px/36px "Open Sans", sans-serif;
}
.fade { position: absolute; inset: auto 0 0; height: 100px; background: linear-gradient(transparent, rgba(0,0,0,.08)); border-bottom: 2px solid #777; }

.dock {
  position: absolute;
  left: 74px;
  top: 1482px;
  display: flex;
  width: 2412px;
  height: 118px;
  padding: 13px 0 0 8px;
  border-radius: 12px 12px 0 0;
  background: linear-gradient(90deg, #5d6762, #5a6a5f 12%, #5e6463 24%, #5a6a6c 36%, #66635f 49%, #566866 66%, #5a6262 80%, #57655e 90%, #5c6563);
}
.app { position: relative; flex: none; width: 94.100px; height: 105px; }
.app svg { width: 84px; height: 84px; margin: 0 auto; overflow: visible; }
.app .full { width: 86px; height: 86px; margin-top: -1px; }
.run::after { content: ""; position: absolute; left: 43px; top: 93px; width: 8px; height: 8px; border-radius: 50%; background: #000; }
.badge {
  position: absolute;
  left: 56px;
  top: -1px;
  width: 34px;
  height: 32px;
  border-radius: 16px;
  background: #f0403b;
  color: #fff;
  font-size: 21px;
  line-height: 32px;
  text-align: center;
}
.wide { font-size: 18px; letter-spacing: -1px; width: 36px; }
.one { left: 62px; }
.sep { width: 2px; height: 86px; margin: 3px 20px 0 22px; background: #3d4646; }
.ic { text-anchor: middle; font-family: Inter, sans-serif; }
.bank { font-family: "Open Sans", sans-serif; font-weight: 800; font-style: italic; }
```
